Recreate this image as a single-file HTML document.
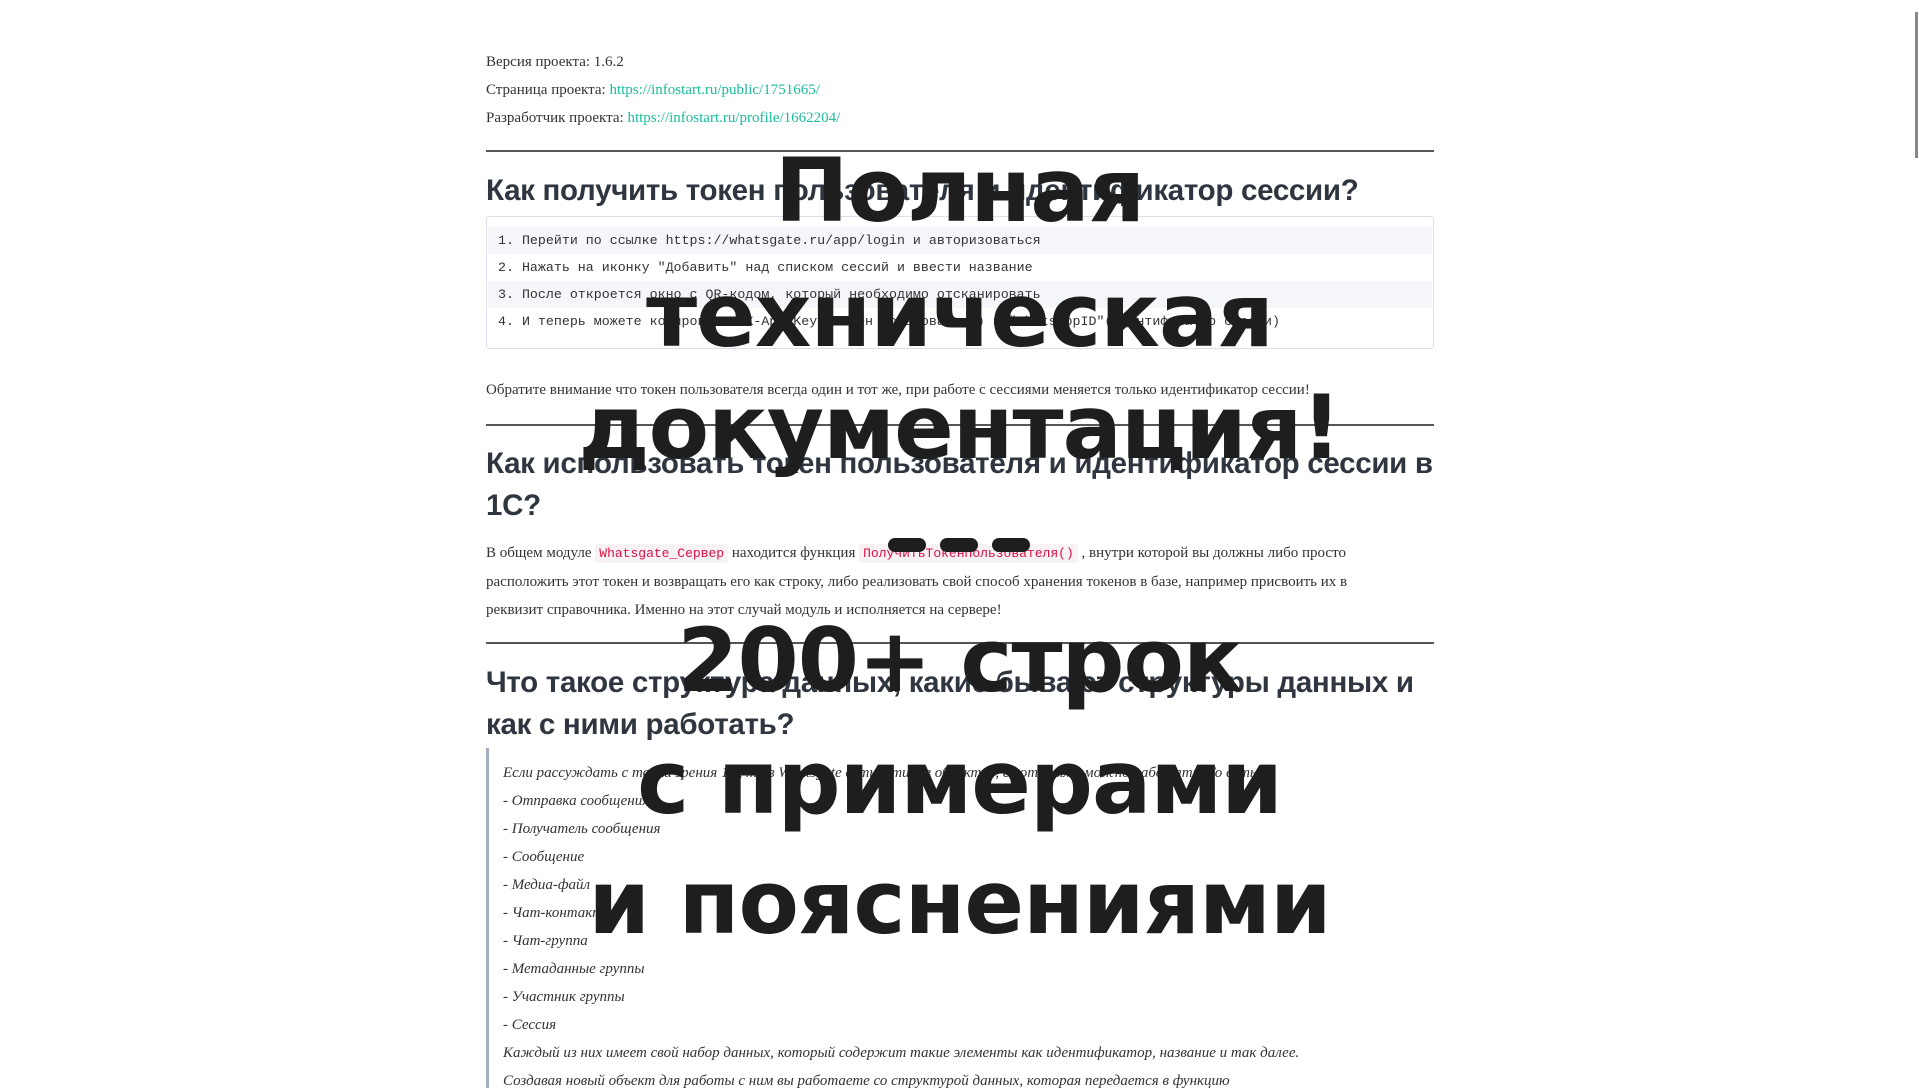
<!DOCTYPE html>
<html><head><meta charset="utf-8"><style>
body{margin:0;width:1919px;height:1079px;overflow:hidden;background:#fff;position:relative;font-family:"Liberation Serif",serif;color:#333}
.p{position:absolute;left:486px;font-size:15px;white-space:nowrap}
a{color:#1abc9c;text-decoration:none}
.hr{position:absolute;left:486px;width:948px;height:2px;background:#555}
h2{position:absolute;left:486px;margin:0;font-family:"Liberation Sans",sans-serif;font-weight:bold;font-size:29.5px;color:#2f3640;line-height:42px;letter-spacing:-0.3px;width:980px}
.code{position:absolute;left:486px;top:216px;width:946px;height:131px;border:1px solid #dde;border-radius:3px;background:#fff}
.row{position:absolute;left:1px;width:944px;height:27px;font-family:"Liberation Mono",monospace;font-size:13.3px;line-height:27px;padding-left:10px;box-sizing:border-box;color:#333}
.ic{font-family:"Liberation Mono",monospace;font-size:13px;color:#d14;background:#f7f2f4;padding:2px 4px;border-radius:3px}
.bq{position:absolute;left:486px;top:748px;width:3px;height:340px;background:#a5adc0}
.q{position:absolute;left:503px;font-style:italic;font-size:15px;white-space:nowrap}
.big{position:absolute;left:0;width:1919px;text-align:center;font-family:"DejaVu Sans",sans-serif;font-weight:bold;font-size:88px;color:#1e1e1e;line-height:120px;white-space:nowrap;letter-spacing:-1px}
.d{position:absolute;top:538px;width:38px;height:14px;border-radius:7px;background:#1e1e1e}
</style></head><body>
<div class="p" style="top:54px">Версия проекта: 1.6.2</div>
<div class="p" style="top:82px">Страница проекта: <a>https://infostart.ru/public/1751665/</a></div>
<div class="p" style="top:110px">Разработчик проекта: <a>https://infostart.ru/profile/1662204/</a></div>
<div class="hr" style="top:150px"></div>
<h2 style="top:170px">Как получить токен пользователя и идентификатор сессии?</h2>
<div class="code">
<div class="row" style="top:10px;background:#f5f6fa">1. Перейти по ссылке https://whatsgate.ru/app/login и авторизоваться</div>
<div class="row" style="top:37px">2. Нажать на иконку "Добавить" над списком сессий и ввести название</div>
<div class="row" style="top:64px;background:#f5f6fa">3. После откроется окно с QR-кодом, который необходимо отсканировать</div>
<div class="row" style="top:91px">4. И теперь можете копировать "X-Api-Key"(токен пользователя) и "WhatsappID"(идентификатор сессии)</div>
</div>
<div class="p" style="top:382px">Обратите внимание что токен пользователя всегда один и тот же, при работе с сессиями меняется только идентификатор сессии!</div>
<div class="hr" style="top:424px"></div>
<h2 style="top:443px;line-height:42px">Как использовать токен пользователя и идентификатор сессии в<br>1С?</h2>
<div class="p" style="top:545px">В общем модуле <span class="ic">Whatsgate_Сервер</span> находится функция <span class="ic">ПолучитьТокенПользователя()</span> , внутри которой вы должны либо просто</div>
<div class="p" style="top:574px">расположить этот токен и возвращать его как строку, либо реализовать свой способ хранения токенов в базе, например присвоить их в</div>
<div class="p" style="top:602px">реквизит справочника. Именно на этот случай модуль и исполняется на сервере!</div>
<div class="hr" style="top:642px"></div>
<h2 style="top:662px">Что такое структура данных, какие бывают структуры данных и<br>как с ними работать?</h2>
<div class="bq"></div>
<div class="q" style="top:765px">Если рассуждать с точки зрения 1С, то в Whatsgate есть 8 типов объектов, с которыми можно работать. То есть:</div>
<div class="q" style="top:793px">- Отправка сообщения</div>
<div class="q" style="top:821px">- Получатель сообщения</div>
<div class="q" style="top:849px">- Сообщение</div>
<div class="q" style="top:877px">- Медиа-файл</div>
<div class="q" style="top:905px">- Чат-контакт</div>
<div class="q" style="top:933px">- Чат-группа</div>
<div class="q" style="top:961px">- Метаданные группы</div>
<div class="q" style="top:989px">- Участник группы</div>
<div class="q" style="top:1017px">- Сессия</div>
<div class="q" style="top:1045px">Каждый из них имеет свой набор данных, который содержит такие элементы как идентификатор, название и так далее.</div>
<div class="q" style="top:1073px">Создавая новый объект для работы с ним вы работаете со структурой данных, которая передается в функцию</div>
<div style="position:absolute;left:1915px;top:12px;width:3px;height:146px;background:#888"></div>
<div class="big" style="top:131px">Полная</div>
<div class="big" style="top:256px">техническая</div>
<div class="big" style="top:368px">документация!</div>
<div class="d" style="left:888px"></div><div class="d" style="left:940px"></div><div class="d" style="left:992px"></div>
<div class="big" style="top:601px">200+ строк</div>
<div class="big" style="top:723px">с примерами</div>
<div class="big" style="top:843px">и пояснениями</div>
</body></html>
